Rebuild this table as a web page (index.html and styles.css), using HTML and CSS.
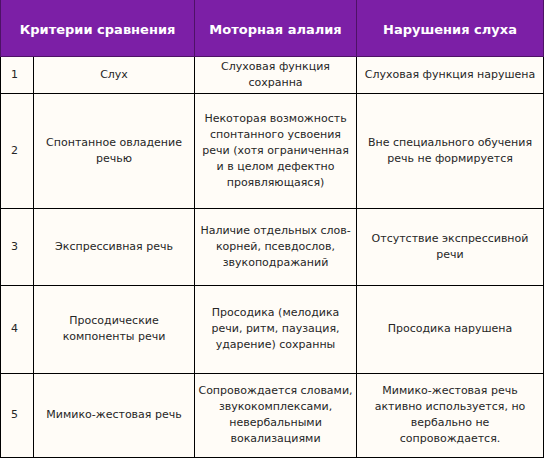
FILE: index.html
```html
<!DOCTYPE html>
<html lang="ru">
<head>
<meta charset="utf-8">
<link rel="stylesheet" href="styles.css">
</head>
<body>
<table class="cmp">
  <colgroup>
    <col class="c-num"><col class="c-crit"><col class="c-mot"><col class="c-hear">
  </colgroup>
  <thead>
    <tr class="r-head">
      <th colspan="2">Критерии сравнения</th>
      <th>Моторная алалия</th>
      <th>Нарушения слуха</th>
    </tr>
  </thead>
  <tbody>
    <tr class="r1">
      <td class="num">1</td>
      <td>Слух</td>
      <td>Слуховая функция<br>сохранна</td>
      <td>Слуховая функция нарушена</td>
    </tr>
    <tr class="r2">
      <td class="num">2</td>
      <td>Спонтанное овладение<br>речью</td>
      <td>Некоторая возможность<br>спонтанного усвоения<br>речи (хотя ограниченная<br>и в целом дефектно<br>проявляющаяся)</td>
      <td>Вне специального обучения<br>речь не формируется</td>
    </tr>
    <tr class="r3">
      <td class="num">3</td>
      <td>Экспрессивная речь</td>
      <td>Наличие отдельных слов-<br>корней, псевдослов,<br>звукоподражаний</td>
      <td>Отсутствие экспрессивной<br>речи</td>
    </tr>
    <tr class="r4">
      <td class="num">4</td>
      <td>Просодические<br>компоненты речи</td>
      <td>Просодика (мелодика<br>речи, ритм, паузация,<br>ударение) сохранны</td>
      <td>Просодика нарушена</td>
    </tr>
    <tr class="r5">
      <td class="num">5</td>
      <td>Мимико-жестовая речь</td>
      <td>Сопровождается словами,<br>звукокомплексами,<br>невербальными<br>вокализациями</td>
      <td>Мимико-жестовая речь<br>активно используется, но<br>вербально не<br>сопровождается.</td>
    </tr>
  </tbody>
</table>
</body>
</html>
```
FILE: styles.css
```css
html, body {
  margin: 0;
  padding: 0;
  background: #ffffff;
}
.cmp {
  border-collapse: collapse;
  table-layout: fixed;
  width: 543px;
  font-family: "DejaVu Sans", Verdana, sans-serif;
  font-size: 11px;
  line-height: 16px;
  color: #262626;
  background: #fffcf7;
}
.c-num { width: 33px; }
.c-crit { width: 161px; }
.c-mot { width: 162px; }
.c-hear { width: 187px; }
.cmp th {
  background: #7c1fa6;
  color: #ffffff;
  font-weight: bold;
  font-size: 13px;
  text-align: center;
  border: 1px solid #4e1266;
  border-top: none;
  padding: 5px 0 0 0;
}
.cmp td {
  border: 1px solid #000000;
  text-align: center;
  vertical-align: middle;
  padding: 0 2px;
}
.cmp td.num {
  text-align: left;
  padding-left: 10px;
}
.r-head { height: 56px; }
.r1 { height: 37px; }
.r2 { height: 115px; }
.r3 { height: 77px; }
.r4 { height: 88px; }
.r5 { height: 84px; }
```
